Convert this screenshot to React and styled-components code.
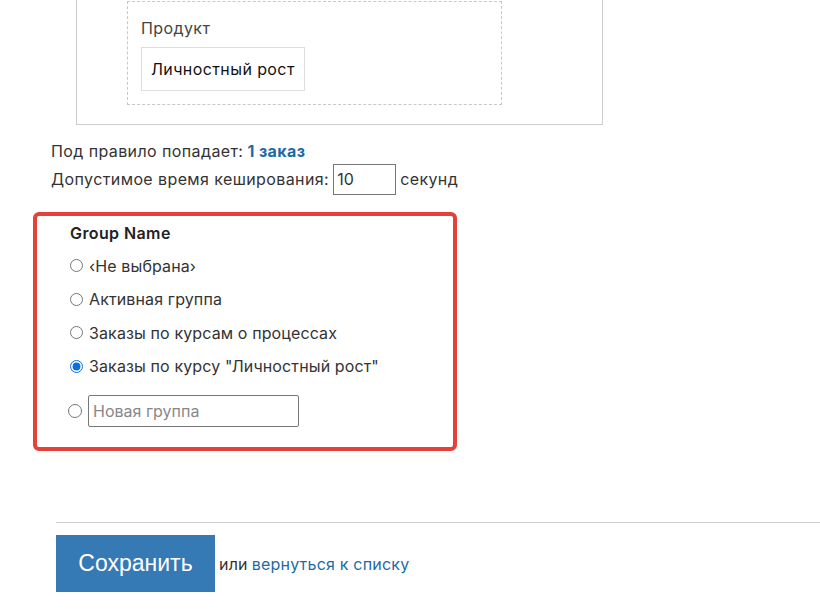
import styled, { createGlobalStyle } from 'styled-components';

const GlobalStyle = createGlobalStyle`
    body {
        margin: 0;
        background: #fff;
        font-family: Inter, "Noto Sans", sans-serif;
        font-size: 16px;
        letter-spacing: 0.4px;
        color: #333;
    }
`;

const Page = styled.div`
    width: 820px;
    height: 611px;
    overflow: hidden;
`;

const RuleBox = styled.div`
    margin: -30px 0 0 76px;
    width: 527px;
    border: 1px solid #ccc;
    padding: 30px 0 19px 50px;
    box-sizing: border-box;
`;

const Condition = styled.div`
    width: 375px;
    border: 1px dashed #c8c8c8;
    padding: 15px 0 13px 13px;
    box-sizing: border-box;
`;

const FieldLabel = styled.div`
    line-height: 22px;
    color: #444;
    margin-bottom: 8px;
`;

const Chip = styled.div`
    display: inline-flex;
    align-items: center;
    height: 44px;
    padding: 0 9px;
    border: 1px solid #ddd;
    box-sizing: border-box;
    color: #111;
`;

const Info = styled.div`
    margin: 12px 0 0 51px;
`;

const Line = styled.div`
    display: flex;
    align-items: center;
    height: 28px;
    gap: 4px;
`;

const Strong = styled.b`
    color: #1f6aa5;
`;

const SmallInput = styled.input`
    width: 63px;
    height: 31px;
    box-sizing: border-box;
    border: 1px solid #777;
    font: inherit;
    padding: 0 3px;
    color: #333;
`;

const GroupBox = styled.div`
    margin: 19px 0 0 33px;
    width: 424px;
    height: 239px;
    box-sizing: border-box;
    border: 4px solid #e5403a;
    border-radius: 6px;
    padding: 5px 0 0 33px;
`;

const GroupTitle = styled.div`
    font-weight: 600;
    line-height: 24px;
    color: #222;
    margin-bottom: 4px;
`;

const Option = styled.label`
    display: flex;
    align-items: center;
    height: 33.5px;
    gap: 6px;
    color: #333;
    letter-spacing: 0.12px;
    input {
        margin: 0;
        width: 13px;
        height: 13px;
        accent-color: #0b6fe0;
    }
`;

const NewRow = styled.div`
    display: flex;
    align-items: center;
    gap: 6px;
    margin: 12px 0 0 -2px;
    input[type='radio'] {
        margin: 0;
        width: 14px;
        height: 14px;
    }
`;

const TextInput = styled.input`
    width: 211px;
    height: 32px;
    box-sizing: border-box;
    border: 1px solid #777;
    border-radius: 2px;
    font: inherit;
    padding: 0 4px;
    &::placeholder {
        color: #888;
    }
`;

const Divider = styled.hr`
    margin: 71px 0 0 56px;
    border: 0;
    border-top: 1px solid #ccc;
`;

const Actions = styled.div`
    display: flex;
    align-items: center;
    gap: 4px;
    margin: 12px 0 0 56px;
    color: #333;
    letter-spacing: 0.2px;
`;

const SaveButton = styled.button`
    width: 159px;
    height: 57px;
    background: #3579b5;
    border: 0;
    color: #fff;
    font-family: "Liberation Sans", Arial, sans-serif;
    font-size: 23px;
    letter-spacing: 0;
`;

const Link = styled.a`
    color: #1f6aa5;
    text-decoration: none;
`;

const groups = ['‹Не выбрана›', 'Активная группа', 'Заказы по курсам о процессах', 'Заказы по курсу "Личностный рост"'];

const App = () => {
    return (
        <Page>
            <GlobalStyle />
            <RuleBox>
                <Condition>
                    <FieldLabel>Продукт</FieldLabel>
                    <Chip>Личностный рост</Chip>
                </Condition>
            </RuleBox>
            <Info>
                <Line>
                    Под правило попадает: <Strong>1 заказ</Strong>
                </Line>
                <Line>
                    Допустимое время кеширования: <SmallInput defaultValue="10" /> секунд
                </Line>
            </Info>
            <GroupBox>
                <GroupTitle>Group Name</GroupTitle>
                {groups.map((name, i) => (
                    <Option key={name}>
                        <input type="radio" name="group" defaultChecked={i === 3} />
                        {name}
                    </Option>
                ))}
                <NewRow>
                    <input type="radio" name="group" />
                    <TextInput placeholder="Новая группа" />
                </NewRow>
            </GroupBox>
            <Divider />
            <Actions>
                <SaveButton>Сохранить</SaveButton>
                или <Link href="#">вернуться к списку</Link>
            </Actions>
        </Page>
    );
};

export default App;
